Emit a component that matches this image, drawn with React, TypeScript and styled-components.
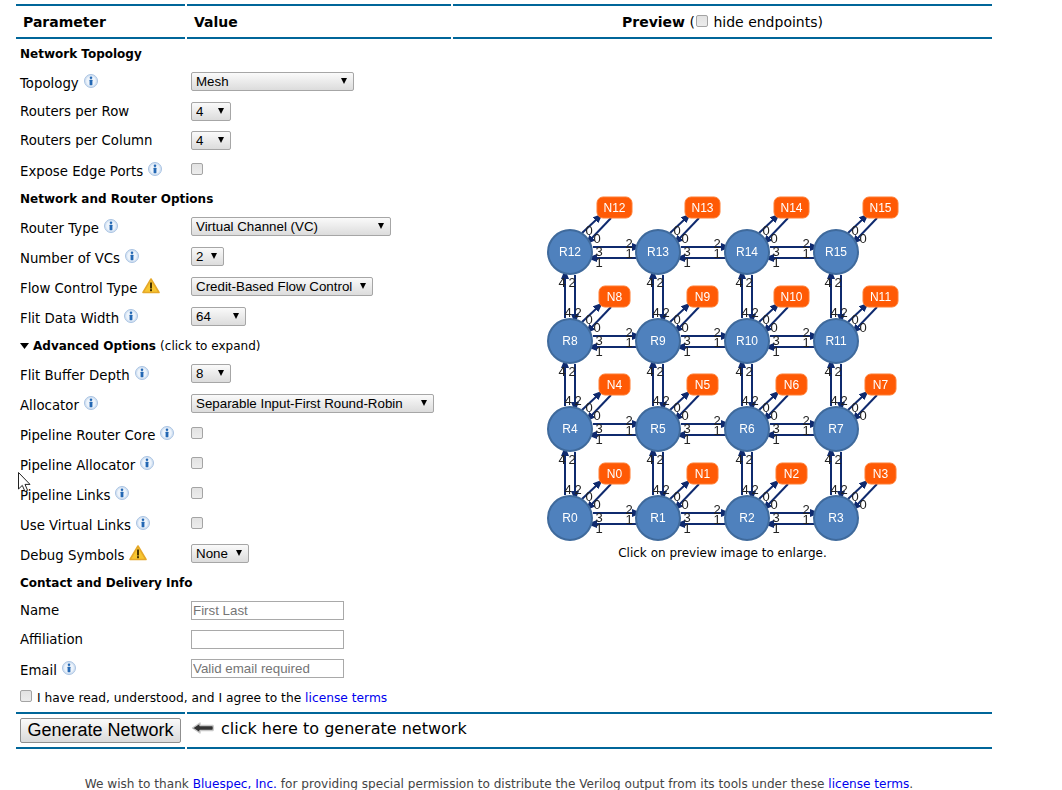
import React from 'react';
import styled, { createGlobalStyle } from 'styled-components';

const GlobalStyle = createGlobalStyle`
  html, body {
    margin: 0;
    padding: 0;
    background: #fff;
  }
  body {
    font-family: "DejaVu Sans", sans-serif;
    font-size: 13.3px;
    color: #000;
  }
`;

const rule = '#006699';

const Page = styled.div`
  position: relative;
  width: 1062px;
  height: 790px;
  overflow: hidden;
  padding: 4px 0 0 16px;
  box-sizing: border-box;
`;

const Columns = styled.div`
  display: grid;
  grid-template-columns: 169px 264px 539px;
  column-gap: 2px;
  width: 976px;
`;

const HeadCell = styled.div<{ $center?: boolean }>`
  height: 31px;
  border-top: 2px solid ${rule};
  border-bottom: 2px solid ${rule};
  display: flex;
  align-items: center;
  justify-content: ${(p) => (p.$center ? 'center' : 'flex-start')};
  padding-left: ${(p) => (p.$center ? '0' : '7px')};
  font-size: 14px;
  white-space: pre;
  b { font-weight: bold; }
  input { margin: -2px 1px 0; }
`;

const Main = styled.div`
  display: grid;
  grid-template-columns: 435px 539px;
  column-gap: 2px;
  width: 976px;
  height: 673px;
`;

const Form = styled.div`
  display: flex;
  flex-direction: column;
`;

const Row = styled.div<{ $h: number }>`
  height: ${(p) => p.$h}px;
  display: grid;
  grid-template-columns: 171px 1fr;
  align-items: center;
  padding-left: 4px;
  > input[type='checkbox'] {
    align-self: start;
    margin-top: 8px;
  }
`;

const SectionTitle = styled.div<{ $h: number; $drop?: number }>`
  height: ${(p) => p.$h}px;
  box-sizing: border-box;
  padding-top: ${(p) => p.$drop ?? 0}px;
  display: flex;
  align-items: center;
  padding-left: 4px;
  font-size: 12px;
  font-weight: bold;
  white-space: pre;
  span { font-weight: normal; }
`;

const Label = styled.label<{ $drop?: number }>`
  display: flex;
  align-items: center;
  font-size: 13.3px;
  white-space: nowrap;
  padding-top: ${(p) => p.$drop ?? 2}px;
  svg { margin: -4px 0 0 5px; flex: none; }
`;

const SelectWrap = styled.div<{ $w: number }>`
  position: relative;
  align-self: start;
  margin-top: 5px;
  width: ${(p) => p.$w}px;
  height: 19px;
  &::after {
    content: '';
    position: absolute;
    right: 7px;
    top: 6px;
    border-left: 3.5px solid transparent;
    border-right: 3.5px solid transparent;
    border-top: 6px solid #000;
    pointer-events: none;
  }
`;

const Select = styled.select`
  appearance: none;
  display: block;
  width: 100%;
  height: 100%;
  margin: 0;
  padding: 0 0 0 4px;
  border: 1px solid #a6a6a6;
  border-radius: 2px;
  background: linear-gradient(#fafafa, #dcdcdc);
  font-family: "Liberation Sans", sans-serif;
  font-size: 13.33px;
  color: #000;
`;

const Check = styled.input.attrs({ type: 'checkbox' })`
  appearance: none;
  display: inline-block;
  width: 12px;
  height: 12px;
  margin: 0;
  border: 1px solid #a4a4a4;
  border-radius: 2px;
  background: linear-gradient(#e2e2e2, #ececec);
  box-sizing: border-box;
`;

const TextInput = styled.input`
  display: block;
  align-self: start;
  width: 153px;
  height: 19px;
  box-sizing: border-box;
  margin: 5px 0 0;
  padding: 0 1px;
  border: 1px solid #a9a9a9;
  font-family: "Liberation Sans", sans-serif;
  font-size: 13.33px;
  &::placeholder { color: #757575; opacity: 1; }
`;

const Agree = styled.div<{ $h: number }>`
  height: ${(p) => p.$h}px;
  box-sizing: border-box;
  padding: 2px 0 0 4px;
  display: flex;
  align-items: center;
  gap: 5px;
  font-size: 12.25px;
  white-space: pre;
  input { margin-top: -5px; }
  a { color: #0000ee; text-decoration: none; }
`;

const Preview = styled.div`
  display: flex;
  flex-direction: column;
  align-items: center;
  padding-top: 151px;
`;

const Diagram = styled.svg`
  display: block;
  filter: blur(0.3px);
  font-family: "Liberation Sans", sans-serif;
`;

const Caption = styled.div`
  margin-top: 3px;
  font-size: 12px;
`;

const ActionCell = styled.div<{ $span?: number }>`
  grid-column: span ${(p) => p.$span ?? 1};
  height: 33px;
  border-top: 2px solid ${rule};
  border-bottom: 2px solid ${rule};
  display: flex;
  align-items: center;
`;

const GenerateButton = styled.button`
  width: 161px;
  height: 25px;
  margin: 0 0 0 4px;
  padding: 0;
  border: 1px solid #8f8f8f;
  border-radius: 2px;
  background: linear-gradient(#fafafa, #dadada);
  font-family: "Liberation Sans", sans-serif;
  font-size: 18px;
  color: #000;
`;

const Hint = styled.div`
  display: flex;
  align-items: center;
  gap: 6px;
  padding: 0 0 5px 4px;
  font-size: 16px;
  white-space: pre;
`;

const Footer = styled.div`
  margin-top: 28px;
  width: 966px;
  text-align: center;
  font-size: 12.1px;
  color: #444;
  white-space: pre;
  a { color: #0000ee; text-decoration: none; }
`;

const Cursor = styled.svg`
  position: absolute;
  left: 18px;
  top: 472px;
`;

const InfoIcon = () => (
  <svg width="14" height="14" viewBox="0 0 14 14">
    <circle cx="7" cy="7" r="6.5" fill="#d5e3f3" stroke="#a9c3e2" />
    <circle cx="7" cy="7" r="4.8" fill="#eef4fb" />
    <circle cx="7" cy="3.8" r="1.3" fill="#2468b4" />
    <rect x="5.6" y="5.8" width="2.8" height="5.4" rx="0.4" fill="#2468b4" />
  </svg>
);

const WarnIcon = () => (
  <svg width="18" height="16" viewBox="0 0 18 16">
    <path d="M9 1 L17 14.5 H1 Z" fill="#f7c631" stroke="#e5a829" strokeWidth="1.6" strokeLinejoin="round" />
    <rect x="8" y="4.5" width="2" height="6" fill="#4a3500" />
    <rect x="8" y="11.2" width="2" height="2" fill="#4a3500" />
  </svg>
);

const Choice = ({ w, value, options }: { w: number; value: string; options?: string[] }) => (
  <SelectWrap $w={w}>
    <Select defaultValue={value}>
      {(options || [value]).map((o) => (
        <option key={o}>{o}</option>
      ))}
    </Select>
  </SelectWrap>
);

const colX = [570, 658, 747, 836];
const rowY = [518, 429, 341, 252];
const navy = '#0f2a6e';

const EdgeLabel = ({ x, y, t }: { x: number; y: number; t: string }) => (
  <text x={x} y={y + 4.5} textAnchor="middle" fontSize="13" fill="#222">
    {t}
  </text>
);

const Edge = ({ x1, y1, x2, y2 }: { x1: number; y1: number; x2: number; y2: number }) => (
  <line x1={x1} y1={y1} x2={x2} y2={y2} stroke={navy} strokeWidth="2" markerEnd="url(#head)" />
);

const MeshPreview = () => {
  const routers = [];
  for (let r = 0; r < 4; r++) {
    for (let c = 0; c < 4; c++) {
      const x = colX[c];
      const y = rowY[r];
      const id = r * 4 + c;
      const nw = id >= 10 ? 35 : 31;
      const nx = x + 44.5;
      const ny = y - 44.5;
      routers.push(
        <g key={id}>
          <Edge x1={x + 12} y1={y - 19} x2={x + 27} y2={y - 33} />
          <Edge x1={x + 41} y1={y - 34} x2={x + 21} y2={y - 13} />
          <EdgeLabel x={x + 19} y={y - 22} t="0" />
          <EdgeLabel x={x + 27} y={y - 14} t="0" />
          {c < 3 && (
            <g>
              <Edge x1={x + 23} y1={y - 5} x2={colX[c + 1] - 24} y2={y - 5} />
              <Edge x1={colX[c + 1] - 22} y1={y + 6} x2={x + 25} y2={y + 6} />
              <EdgeLabel x={x + 29} y={y - 1} t="3" />
              <EdgeLabel x={x + 29} y={y + 10} t="1" />
              <EdgeLabel x={x + 59} y={y - 9} t="2" />
              <EdgeLabel x={x + 59} y={y + 1} t="1" />
            </g>
          )}
          {r < 3 && (
            <g>
              <Edge x1={x - 5} y1={y - 23} x2={x - 5} y2={rowY[r + 1] + 25} />
              <Edge x1={x + 5} y1={rowY[r + 1] + 23} x2={x + 5} y2={y - 25} />
              <EdgeLabel x={x - 8} y={rowY[r + 1] + 30} t="4" />
              <EdgeLabel x={x + 2} y={rowY[r + 1] + 30} t="2" />
              <EdgeLabel x={x - 2} y={y - 29} t="4" />
              <EdgeLabel x={x + 8} y={y - 29} t="2" />
            </g>
          )}
          <circle cx={x} cy={y} r="22" fill="#4f81bd" stroke="#3f6a9c" strokeWidth="2" />
          <text x={x} y={y + 4} textAnchor="middle" fontSize="12" fill="#fff">
            R{id}
          </text>
          <rect x={nx - nw / 2} y={ny - 10.5} width={nw} height="21" rx="6" fill="#ff5a05" stroke="#ff7d33" />
          <text x={nx} y={ny + 4} textAnchor="middle" fontSize="12" fill="#fff">
            N{id}
          </text>
        </g>
      );
    }
  }
  return (
    <Diagram width="401" height="353" viewBox="522 190 401 353">
      <defs>
        <marker id="head" markerWidth="10" markerHeight="8" refX="2" refY="4" orient="auto" markerUnits="userSpaceOnUse">
          <path d="M0 0 L10 4 L0 8 Z" fill={navy} />
        </marker>
      </defs>
      {routers}
    </Diagram>
  );
};

export default function App() {
  return (
    <Page>
      <GlobalStyle />
      <Columns>
        <HeadCell><b>Parameter</b></HeadCell>
        <HeadCell><b>Value</b></HeadCell>
        <HeadCell $center>
          <b>Preview</b> (<Check /> hide endpoints)
        </HeadCell>
      </Columns>

      <Main>
        <Form>
          <SectionTitle $h={28} $drop={2}>Network Topology</SectionTitle>
          <Row $h={30}>
            <Label>Topology <InfoIcon /></Label>
            <Choice w={163} value="Mesh" />
          </Row>
          <Row $h={29}>
            <Label $drop={0}>Routers per Row</Label>
            <Choice w={40} value="4" />
          </Row>
          <Row $h={29}>
            <Label $drop={0}>Routers per Column</Label>
            <Choice w={40} value="4" />
          </Row>
          <Row $h={29}>
            <Label $drop={3}>Expose Edge Ports <InfoIcon /></Label>
            <Check />
          </Row>

          <SectionTitle $h={28} $drop={2}>Network and Router Options</SectionTitle>
          <Row $h={30}>
            <Label>Router Type <InfoIcon /></Label>
            <Choice w={200} value="Virtual Channel (VC)" />
          </Row>
          <Row $h={30}>
            <Label>Number of VCs <InfoIcon /></Label>
            <Choice w={33} value="2" />
          </Row>
          <Row $h={30}>
            <Label>Flow Control Type <WarnIcon /></Label>
            <Choice w={182} value="Credit-Based Flow Control" />
          </Row>
          <Row $h={30}>
            <Label>Flit Data Width <InfoIcon /></Label>
            <Choice w={55} value="64" />
          </Row>

          <SectionTitle $h={27}>
            <svg width="9" height="6" viewBox="0 0 9 6" style={{ marginRight: 4 }}>
              <path d="M0 0 H9 L4.5 6 Z" fill="#000" />
            </svg>
            Advanced Options <span>(click to expand)</span>
          </SectionTitle>
          <Row $h={30}>
            <Label>Flit Buffer Depth <InfoIcon /></Label>
            <Choice w={40} value="8" />
          </Row>
          <Row $h={30}>
            <Label>Allocator <InfoIcon /></Label>
            <Choice w={243} value="Separable Input-First Round-Robin" />
          </Row>
          <Row $h={30}>
            <Label>Pipeline Router Core <InfoIcon /></Label>
            <Check />
          </Row>
          <Row $h={30}>
            <Label>Pipeline Allocator <InfoIcon /></Label>
            <Check />
          </Row>
          <Row $h={30}>
            <Label>Pipeline Links <InfoIcon /></Label>
            <Check />
          </Row>
          <Row $h={30}>
            <Label>Use Virtual Links <InfoIcon /></Label>
            <Check />
          </Row>
          <Row $h={30}>
            <Label>Debug Symbols <WarnIcon /></Label>
            <Choice w={58} value="None" />
          </Row>

          <SectionTitle $h={27}>Contact and Delivery Info</SectionTitle>
          <Row $h={29}>
            <Label $drop={0}>Name</Label>
            <TextInput placeholder="First Last" />
          </Row>
          <Row $h={29}>
            <Label $drop={0}>Affiliation</Label>
            <TextInput />
          </Row>
          <Row $h={30}>
            <Label>Email <InfoIcon /></Label>
            <TextInput placeholder="Valid email required" />
          </Row>
          <Agree $h={26}>
            <Check />
            <span>I have read, understood, and I agree to the <a href="#license">license terms</a></span>
          </Agree>
        </Form>

        <Preview>
          <MeshPreview />
          <Caption>Click on preview image to enlarge.</Caption>
        </Preview>
      </Main>

      <Columns>
        <ActionCell>
          <GenerateButton>Generate Network</GenerateButton>
        </ActionCell>
        <ActionCell $span={2}>
          <Hint>
            <svg width="24" height="14" viewBox="0 0 24 14">
              <path d="M1.5 7 L9 2 V4.5 H22 Q23 7 22 9.5 H9 V12 Z" fill="#333" stroke="#c8c8c8" strokeWidth="1.4" strokeLinejoin="round" />
            </svg>
            click here to generate network
          </Hint>
        </ActionCell>
      </Columns>

      <Footer>
        We wish to thank <a href="#bluespec">Bluespec, Inc.</a> for providing special permission to distribute the Verilog output from its tools under these <a href="#terms">license terms</a>.
      </Footer>

      <Cursor width="14" height="22" viewBox="0 0 14 22">
        <path d="M0.5 0.5 V17 L4.3 13.4 L7 19.5 L9.6 18.4 L7 12.4 H12 Z" fill="#fff" stroke="#222" strokeWidth="1" />
      </Cursor>
    </Page>
  );
}
